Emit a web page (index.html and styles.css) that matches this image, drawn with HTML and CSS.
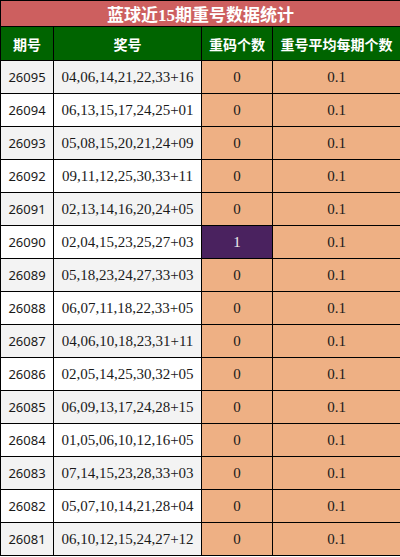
FILE: index.html
```html
<!DOCTYPE html>
<html>
<head>
    <meta charset="utf-8">
    <title>蓝球近15期重号数据统计</title>
    <link rel="stylesheet" href="styles.css">
</head>
<body>
<table class="stat-table">
    <colgroup>
        <col class="col-issue">
        <col class="col-nums">
        <col class="col-repeat">
        <col class="col-avg">
    </colgroup>
    <tr class="title-row">
        <td colspan="4">蓝球近15期重号数据统计</td>
    </tr>
    <tr class="head-row">
        <th>期号</th>
        <th>奖号</th>
        <th>重码个数</th>
        <th>重号平均每期个数</th>
    </tr>
    <tr class="odd"><td class="issue">26095</td><td class="nums">04,06,14,21,22,33+16</td><td class="repeat">0</td><td class="avg">0.1</td></tr>
    <tr><td class="issue">26094</td><td class="nums">06,13,15,17,24,25+01</td><td class="repeat">0</td><td class="avg">0.1</td></tr>
    <tr class="odd"><td class="issue">26093</td><td class="nums">05,08,15,20,21,24+09</td><td class="repeat">0</td><td class="avg">0.1</td></tr>
    <tr><td class="issue">26092</td><td class="nums">09,11,12,25,30,33+11</td><td class="repeat">0</td><td class="avg">0.1</td></tr>
    <tr class="odd"><td class="issue">26091</td><td class="nums">02,13,14,16,20,24+05</td><td class="repeat">0</td><td class="avg">0.1</td></tr>
    <tr><td class="issue">26090</td><td class="nums">02,04,15,23,25,27+03</td><td class="repeat hit">1</td><td class="avg">0.1</td></tr>
    <tr class="odd"><td class="issue">26089</td><td class="nums">05,18,23,24,27,33+03</td><td class="repeat">0</td><td class="avg">0.1</td></tr>
    <tr><td class="issue">26088</td><td class="nums">06,07,11,18,22,33+05</td><td class="repeat">0</td><td class="avg">0.1</td></tr>
    <tr class="odd"><td class="issue">26087</td><td class="nums">04,06,10,18,23,31+11</td><td class="repeat">0</td><td class="avg">0.1</td></tr>
    <tr><td class="issue">26086</td><td class="nums">02,05,14,25,30,32+05</td><td class="repeat">0</td><td class="avg">0.1</td></tr>
    <tr class="odd"><td class="issue">26085</td><td class="nums">06,09,13,17,24,28+15</td><td class="repeat">0</td><td class="avg">0.1</td></tr>
    <tr><td class="issue">26084</td><td class="nums">01,05,06,10,12,16+05</td><td class="repeat">0</td><td class="avg">0.1</td></tr>
    <tr class="odd"><td class="issue">26083</td><td class="nums">07,14,15,23,28,33+03</td><td class="repeat">0</td><td class="avg">0.1</td></tr>
    <tr><td class="issue">26082</td><td class="nums">05,07,10,14,21,28+04</td><td class="repeat">0</td><td class="avg">0.1</td></tr>
    <tr class="odd"><td class="issue">26081</td><td class="nums">06,10,12,15,24,27+12</td><td class="repeat">0</td><td class="avg">0.1</td></tr>
</table>
</body>
</html>
```

FILE: styles.css
```css
body {
    margin: 0;
    background: #fff;
}
.stat-table {
    border-collapse: collapse;
    width: 400px;
    table-layout: fixed;
    font-family: "Liberation Serif", "Noto Sans CJK SC", serif;
    font-size: 15px;
    color: #1a1a1a;
}
.col-issue { width: 53px; }
.col-nums { width: 148px; }
.col-repeat { width: 71px; }
.col-avg { width: 128px; }
.stat-table td,
.stat-table th {
    border: 1px solid #000;
    text-align: center;
    padding: 0;
}
.title-row td {
    height: 25px;
    background: #cd5f5f;
    color: #fff;
    font-family: "Liberation Serif", "Noto Sans CJK SC", serif;
    font-weight: bold;
    font-size: 17px;
}
.head-row th {
    height: 33px;
    background: #006400;
    color: #fff;
    font-family: "Noto Sans CJK SC", sans-serif;
    font-weight: bold;
    font-size: 14px;
}
.stat-table tr td {
    height: 32px;
}
.stat-table .title-row td {
    height: 25px;
}
.issue {
    font-family: "Noto Sans", "Noto Sans CJK SC", sans-serif;
    font-size: 13px;
    background: #fff;
}
.nums {
    background: #fff;
}
.odd .issue,
.odd .nums {
    background: #f3f3f3;
}
.repeat,
.avg {
    background: #eeb084;
}
.repeat.hit {
    background: #4a225f;
    color: #eee;
}
```
